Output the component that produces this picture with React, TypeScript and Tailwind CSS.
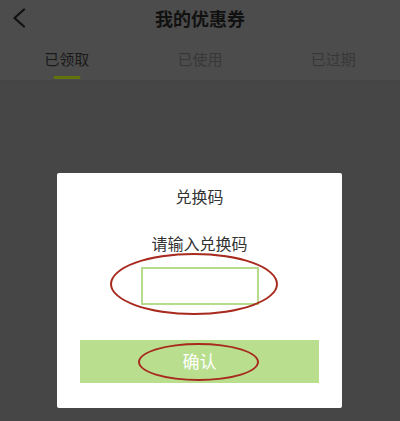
export default function App() {
  const tabs = ['已领取', '已使用', '已过期']

  return (
    <div
      className="relative h-[421px] w-[400px] overflow-hidden bg-[#464646]"
      style={{ fontFamily: '"Noto Sans", "Noto Sans CJK SC", sans-serif' }}
    >
      {/* 页头（被遮罩压暗） */}
      <header className="bg-[#4c4c4c]">
        <div className="relative flex h-[38px] items-center justify-center">
          <svg
            className="absolute left-[12px] top-[8px]"
            width="14"
            height="20"
            viewBox="0 0 14 20"
            fill="none"
          >
            <path d="M12 1.5 L2.5 10 L12 18.5" stroke="#111" strokeWidth="2.2" strokeLinecap="round" strokeLinejoin="round" />
          </svg>
          <h1 className="text-[18px] font-bold text-[#111]">我的优惠券</h1>
        </div>
        <nav className="grid h-[43px] grid-cols-3 border-b border-[#444]">
          {tabs.map((t, i) => (
            <div key={t} className="relative flex items-center justify-center">
              <span className={`text-[15px] ${i === 0 ? 'text-[#1a1a1a]' : 'text-[#383838]'}`}>{t}</span>
              {i === 0 && (
                <span className="absolute bottom-[1px] left-1/2 h-[3px] w-[27px] -translate-x-1/2 rounded-full bg-[#65730c]" />
              )}
            </div>
          ))}
        </nav>
      </header>

      {/* 兑换码弹窗 */}
      <div className="absolute left-[57px] top-[173px] flex h-[235px] w-[285px] flex-col items-center rounded-[2px] bg-white px-[23px]">
        <h2 className="mt-[13px] text-[16px] leading-[22px] text-[#333]">兑换码</h2>
        <p className="mt-[25px] text-[16px] leading-[22px] text-[#333]">请输入兑换码</p>

        <div className="relative mt-[12px]">
          <input className="block h-[38px] w-[118px] border-2 border-[#b5dc8c] bg-white outline-none" />
          <span className="pointer-events-none absolute left-[-31px] top-[-14px] h-[62px] w-[168px] rounded-[50%] border-2 border-[#a82a1e]" />
        </div>

        <button className="relative mt-[35px] flex h-[43px] w-full items-center justify-center bg-[#b8de8e] text-[17px] text-white">
          确认
          <span className="pointer-events-none absolute left-[58px] top-[3px] h-[38px] w-[121px] rounded-[50%] border-2 border-[#a82a1e]" />
        </button>
      </div>
    </div>
  )
}
